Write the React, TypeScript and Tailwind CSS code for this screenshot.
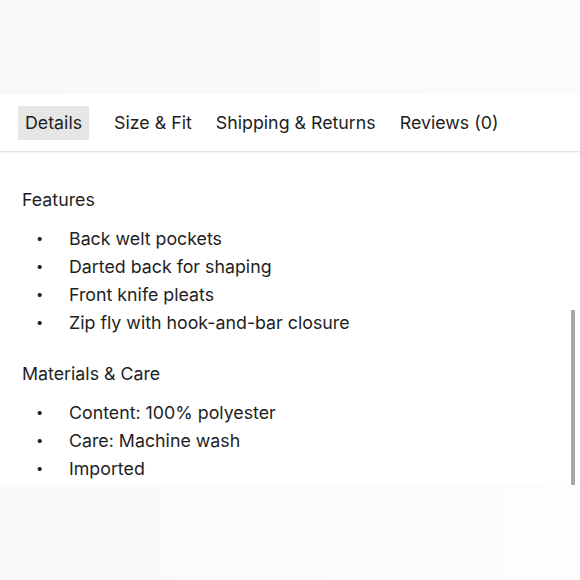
import React from "react";

const features = [
  "Back welt pockets",
  "Darted back for shaping",
  "Front knife pleats",
  "Zip fly with hook-and-bar closure",
];
const materials = ["Content: 100% polyester", "Care: Machine wash", "Imported"];

function List({ items }: { items: string[] }) {
  return (
    <ul className="flex flex-col">
      {items.map((t) => (
        <li key={t} className="flex items-center h-[28px]">
          <span className="w-[47px] pl-[14px] text-[13px]">•</span>
          <span>{t}</span>
        </li>
      ))}
    </ul>
  );
}

export default function App() {
  return (
    <div
      className="w-[580px] h-[580px] bg-white text-[#1e1e1e] text-[17.8px] flex flex-col overflow-hidden relative"
      style={{ fontFamily: "Inter, 'Noto Sans', sans-serif" }}
    >
      <div className="h-[94px] bg-gradient-to-r from-[#f8f8f8] via-[#fafafa] to-[#fbfbfb]" />
      <div className="h-[58px] border-b border-[#e4e4e4] flex items-start pt-[12px] pl-[18px] gap-[12px] shadow-[0_1px_1px_rgba(0,0,0,0.04)]">
        <div className="h-[34px] px-[7px] mr-[7px] bg-[#e6e6e6] flex items-center">Details</div>
        <div className="h-[34px] px-[6px] flex items-center">Size &amp; Fit</div>
        <div className="h-[34px] px-[6px] flex items-center">Shipping &amp; Returns</div>
        <div className="h-[34px] px-[6px] flex items-center">Reviews (0)</div>
      </div>
      <div className="flex-1 flex flex-col px-[22px] pt-[34px]">
        <div className="h-[28px] flex items-center">Features</div>
        <div className="mt-[11px]">
          <List items={features} />
        </div>
        <div className="h-[28px] flex items-center mt-[23px]">Materials &amp; Care</div>
        <div className="mt-[11px]">
          <List items={materials} />
        </div>
      </div>
      <div className="absolute right-[5px] top-[310px] w-[4px] h-[175px] bg-[#a9a9a9]" />
      <div className="absolute left-0 right-0 bottom-0 h-[95px] bg-gradient-to-r from-[#f9f9f9] via-[#fbfbfb] to-[#fdfdfd]" />
    </div>
  );
}
